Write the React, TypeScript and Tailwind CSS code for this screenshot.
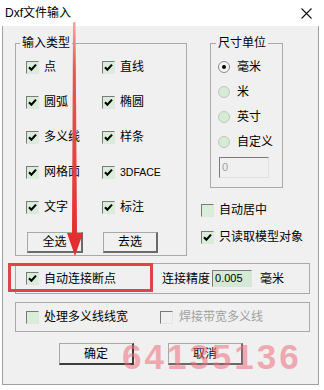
import React from "react";

const FONT = { fontFamily: '"Liberation Sans", "Noto Sans CJK SC", sans-serif' };

function Box({ checked, disabled }: { checked?: boolean; disabled?: boolean }) {
  return (
    <span
      className={
        "w-[13px] h-[13px] shrink-0 flex items-center justify-center border border-t-[#7a7a7a] border-l-[#7a7a7a] border-b-[#e4e4e4] border-r-[#e4e4e4] " +
        (disabled ? "bg-[#f0f0f0]" : "bg-[#d9eed9]")
      }
    >
      {checked && (
        <svg width="9" height="9" viewBox="0 0 9 9">
          <path d="M1 4.2 L3.4 6.8 L8 1.6" stroke="#000" strokeWidth="2.1" fill="none" />
        </svg>
      )}
    </span>
  );
}

function CheckItem({ label, checked, disabled, small }: { label: string; checked?: boolean; disabled?: boolean; small?: boolean }) {
  return (
    <div className="flex items-center gap-[5px] h-[20px]">
      <Box checked={checked} disabled={disabled} />
      <span className={(small ? "text-[10.5px] " : "text-[12px] ") + "leading-[16px] whitespace-nowrap " + (disabled ? "text-[#a0a0a0]" : "text-black")}>
        {label}
      </span>
    </div>
  );
}

function Radio({ label, selected }: { label: string; selected?: boolean }) {
  return (
    <div className="flex items-center gap-[7px] h-[16px]">
      <span
        className={
          "w-[12px] h-[12px] rounded-full shrink-0 flex items-center justify-center border " +
          (selected ? "border-[#8a8a8a] bg-[#f4f4f4]" : "border-[#c4c4c4] bg-[#d4ebd4]")
        }
      >
        {selected && <span className="w-[4px] h-[4px] rounded-full bg-black" />}
      </span>
      <span className="text-[12px] leading-[16px] text-black whitespace-nowrap">{label}</span>
    </div>
  );
}

function Btn({ label, w, h, strong }: { label: string; w: string; h: string; strong?: boolean }) {
  return (
    <div
      className={
        w +
        " " +
        h +
        " flex items-center justify-center bg-[#f0f0f0] text-[12px] text-black border border-t-[#a8a8a8] border-l-[#a8a8a8] border-b-2 border-r-2 " +
        (strong ? "border-b-[#3c3c3c] border-r-[#3c3c3c]" : "border-b-[#6a6a6a] border-r-[#6a6a6a]")
      }
    >
      {label}
    </div>
  );
}

export default function App() {
  return (
    <div className="w-[324px] h-[390px] bg-white relative overflow-hidden" style={FONT}>
      {/* title bar */}
      <div className="h-[26px] w-[319px] flex items-center justify-between pl-[5px] pr-[7px] bg-white">
        <span className="text-[12px] text-black leading-[16px]">Dxf文件输入</span>
        <svg width="11" height="11" viewBox="0 0 11 11">
          <path d="M0.5 0.5 L10.5 10.5 M10.5 0.5 L0.5 10.5" stroke="#111" strokeWidth="1.1" />
        </svg>
      </div>

      {/* body */}
      <div className="ml-[2px] w-[317px] h-[359px] bg-[#f0f0f0] border-l border-r border-b border-[#a0a0a0] flex flex-col">
        <div className="flex pl-[12px] mt-[9px]">
          {/* 输入类型 */}
          <fieldset className="w-[172px] border border-[#a9a9a9] p-0 m-0 shrink-0">
            <legend className="ml-[4px] px-[2px] text-[12px] leading-[16px] text-black">输入类型</legend>
            <div className="pl-[10px] pt-[6px] pb-[2px] grid grid-cols-[76px_auto] gap-y-[15px]">
              <CheckItem label="点" checked />
              <CheckItem label="直线" checked />
              <CheckItem label="圆弧" checked />
              <CheckItem label="椭圆" checked />
              <CheckItem label="多义线" checked />
              <CheckItem label="样条" checked />
              <CheckItem label="网格面" checked />
              <CheckItem label="3DFACE" checked small />
              <CheckItem label="文字" checked />
              <CheckItem label="标注" checked />
              <div className="ml-[1px]">
                <Btn label="全选" w="w-[56px]" h="h-[21px]" />
              </div>
              <div className="ml-[1px]">
                <Btn label="去选" w="w-[55px]" h="h-[21px]" />
              </div>
            </div>
          </fieldset>

          {/* right column */}
          <div className="ml-[14px] flex flex-col">
            <fieldset className="ml-[9px] w-[73px] border border-[#a9a9a9] p-0 m-0">
              <legend className="ml-[5px] px-[2px] text-[12px] leading-[16px] text-black">尺寸单位</legend>
              <div className="pl-[7px] pt-[8px] pb-[9px] flex flex-col gap-[9px]">
                <Radio label="毫米" selected />
                <Radio label="米" />
                <Radio label="英寸" />
                <Radio label="自定义" />
                <div className="ml-[1px] mt-[-2px] w-[50px] h-[21px] border border-t-[#7a7a7a] border-l-[#7a7a7a] border-b-[#e0e0e0] border-r-[#e0e0e0] bg-[#f0f0f0] flex items-center pl-[2px]">
                  <span className="text-[11px] text-[#a0a0a0] leading-none">0</span>
                </div>
              </div>
            </fieldset>
            <div className="mt-[12px] flex flex-col gap-[7px]">
              <CheckItem label="自动居中" />
              <CheckItem label="只读取模型对象" checked />
            </div>
          </div>
        </div>

        {/* frame 1 */}
        <div className="ml-[12px] mt-[7px] w-[295px] h-[31px] border border-[#a9a9a9] flex items-center pl-[10px]">
          <div className="w-[136px]">
            <CheckItem label="自动连接断点" checked />
          </div>
          <span className="text-[12px] leading-[16px] text-black">连接精度</span>
          <div className="ml-[2px] w-[40px] h-[17px] border border-t-[#7a7a7a] border-l-[#7a7a7a] border-b-[#e0e0e0] border-r-[#e0e0e0] bg-[#d4ead4] flex items-center pl-[2px]">
            <span className="text-[11px] leading-none text-black">0.005</span>
          </div>
          <span className="ml-[8px] text-[12px] leading-[16px] text-black">毫米</span>
        </div>

        {/* frame 2 */}
        <div className="ml-[12px] mt-[8px] w-[295px] h-[30px] border border-[#a9a9a9] flex items-center pl-[10px]">
          <div className="w-[134px]">
            <CheckItem label="处理多义线线宽" />
          </div>
          <div className="flex items-center gap-[6px] h-[20px]">
            <Box disabled />
            <span className="text-[12px] leading-[16px] text-[#a0a0a0] whitespace-nowrap">焊接带宽多义线</span>
          </div>
        </div>

        {/* buttons */}
        <div className="mt-[11px] ml-[56px] flex gap-[34px]">
          <Btn label="确定" w="w-[75px]" h="h-[22px]" strong />
          <Btn label="取消" w="w-[75px]" h="h-[22px]" />
        </div>
      </div>

      {/* red highlight box */}
      <div className="absolute left-[8px] top-[263px] w-[145px] h-[29px] border-[3px] border-[#e04444]" />

      {/* watermark */}
      <div
        className="absolute left-[122px] top-[339px] text-[35px] leading-none font-bold tracking-[3px] text-[#ef6f7b] opacity-55 whitespace-nowrap"
        style={{ fontFamily: '"Liberation Sans", sans-serif' }}
      >
        64135136
      </div>

      {/* red arrow */}
      <svg className="absolute left-0 top-0" width="324" height="390" viewBox="0 0 324 390">
        <defs>
          <linearGradient id="ag" x1="0" y1="0" x2="0" y2="1">
            <stop offset="0" stopColor="#f4a6a6" />
            <stop offset="0.2" stopColor="#ec5656" />
            <stop offset="1" stopColor="#e32b2b" />
          </linearGradient>
        </defs>
        <polygon points="73,22 75.5,22 77,233 83,233 75,256 67,233 72,233" fill="url(#ag)" />
      </svg>
    </div>
  );
}
